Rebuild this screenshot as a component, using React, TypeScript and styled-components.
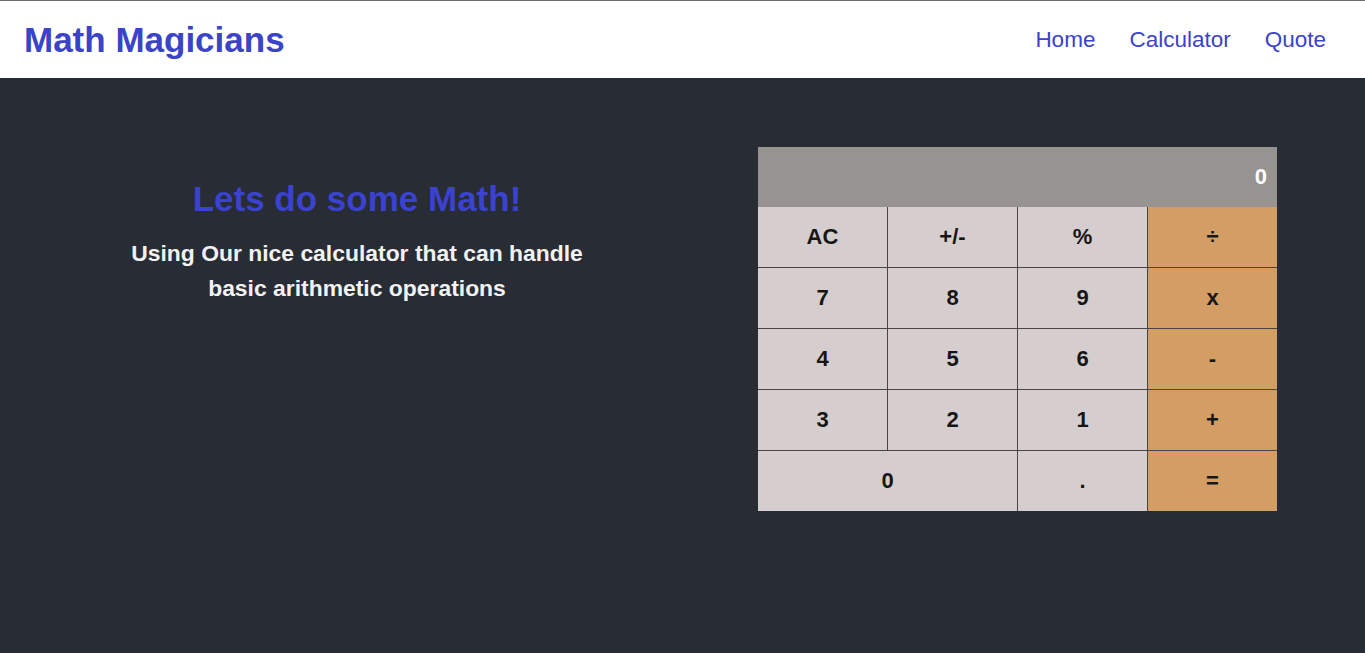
import styled, { createGlobalStyle } from "styled-components"
import React from "react"

const GlobalStyle = createGlobalStyle`
  html, body {
    margin: 0;
    padding: 0;
    background: #282c34;
    font-family: "Liberation Sans", Arial, sans-serif;
  }
  #root {
    min-height: 653px;
    background: #282c34;
  }
`

const Header = styled.header`
  display: flex;
  align-items: center;
  justify-content: space-between;
  height: 77px;
  padding: 0 39px 0 24px;
  background: white;
  border-top: 1px solid #6b6b6b;
`

const Logo = styled.h1`
  margin: 0;
  font-size: 35px;
  font-weight: 700;
  color: #3b43c9;
`

const Nav = styled.nav`
  display: flex;
  gap: 34px;
`

const NavLink = styled.a`
  font-size: 22.5px;
  color: #3b43c9;
  text-decoration: none;
  cursor: pointer;
`

const Main = styled.main`
  display: flex;
  justify-content: space-between;
  align-items: flex-start;
  padding: 69px 88px 0 107px;
`

const Intro = styled.section`
  width: 500px;
  padding-top: 32px;
  text-align: center;
`

const Heading = styled.h2`
  margin: 0 0 17px;
  font-size: 35px;
  font-weight: 700;
  color: #3a42cf;
`

const Blurb = styled.p`
  margin: 0;
  padding: 0 12px;
  font-size: 22.9px;
  font-weight: 700;
  line-height: 35px;
  color: #f2f2f2;
`

const Calculator = styled.div`
  display: grid;
  grid-template-columns: repeat(4, 1fr);
  grid-template-rows: 59px repeat(5, 60px);
  gap: 1px;
  width: 519px;
  background: #4a4545;
`

const Display = styled.div`
  grid-column: 1 / -1;
  display: flex;
  align-items: center;
  justify-content: flex-end;
  padding-right: 10px;
  margin-bottom: -1px;
  background: #979391;
  color: white;
  font-size: 22px;
  font-weight: 700;
`

const Key = styled.button<{ op?: boolean; wide?: boolean }>`
  grid-column: ${(props) => (props.wide ? "span 2" : "auto")};
  border: none;
  padding: 0;
  background: ${(props) => (props.op ? "#d29e63" : "#d6cece")};
  color: #161616;
  font-family: "Liberation Sans", Arial, sans-serif;
  font-size: 22px;
  font-weight: 700;
  cursor: pointer;
`

const keys = [
  ["AC", false],
  ["+/-", false],
  ["%", false],
  ["÷", true],
  ["7", false],
  ["8", false],
  ["9", false],
  ["x", true],
  ["4", false],
  ["5", false],
  ["6", false],
  ["-", true],
  ["3", false],
  ["2", false],
  ["1", false],
  ["+", true],
  ["0", false],
  [".", false],
  ["=", true],
] as const

export default function App() {
  return (
    <>
      <GlobalStyle />
      <Header>
        <Logo>Math Magicians</Logo>
        <Nav>
          <NavLink>Home</NavLink>
          <NavLink>Calculator</NavLink>
          <NavLink>Quote</NavLink>
        </Nav>
      </Header>
      <Main>
        <Intro>
          <Heading>Lets do some Math!</Heading>
          <Blurb>
            Using Our nice calculator that can handle basic arithmetic
            operations
          </Blurb>
        </Intro>
        <Calculator>
          <Display>0</Display>
          {keys.map(([label, op]) => (
            <Key key={label} op={op} wide={label === "0"}>
              {label}
            </Key>
          ))}
        </Calculator>
      </Main>
    </>
  )
}
